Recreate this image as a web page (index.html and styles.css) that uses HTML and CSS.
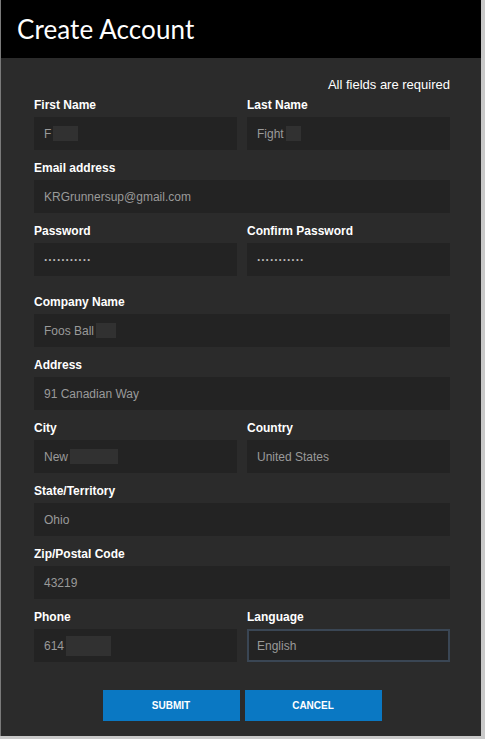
FILE: index.html
```html
<!DOCTYPE html>
<html>
<head>
<meta charset="utf-8">
<link rel="stylesheet" href="styles.css">
</head>
<body>
<div class="window">
  <header class="header"><h1 class="title">Create Account</h1></header>
  <form class="form">
    <div class="required">All fields are required</div>
    <div class="grid">
      <div class="group">
        <div class="label">First Name</div>
        <div class="field">F<span class="redact r-first"></span></div>
      </div>
      <div class="group">
        <div class="label">Last Name</div>
        <div class="field">Fight<span class="redact r-last"></span></div>
      </div>
      <div class="group wide">
        <div class="label">Email address</div>
        <div class="field">KRGrunnersup@gmail.com</div>
      </div>
      <div class="group">
        <div class="label">Password</div>
        <div class="field dots">···········</div>
      </div>
      <div class="group">
        <div class="label">Confirm Password</div>
        <div class="field dots">···········</div>
      </div>
      <div class="group wide section">
        <div class="label">Company Name</div>
        <div class="field">Foos Ball<span class="redact r-company"></span></div>
      </div>
      <div class="group wide">
        <div class="label">Address</div>
        <div class="field">91 Canadian Way</div>
      </div>
      <div class="group">
        <div class="label">City</div>
        <div class="field">New<span class="redact r-city"></span></div>
      </div>
      <div class="group">
        <div class="label">Country</div>
        <div class="field">United States</div>
      </div>
      <div class="group wide">
        <div class="label">State/Territory</div>
        <div class="field">Ohio</div>
      </div>
      <div class="group wide">
        <div class="label">Zip/Postal Code</div>
        <div class="field">43219</div>
      </div>
      <div class="group">
        <div class="label">Phone</div>
        <div class="field">614<span class="redact r-phone"></span></div>
      </div>
      <div class="group">
        <div class="label">Language</div>
        <div class="field focused">English</div>
      </div>
    </div>
    <div class="actions">
      <button type="button" class="btn">SUBMIT</button>
      <button type="button" class="btn">CANCEL</button>
    </div>
  </form>
</div>
</body>
</html>
```
FILE: styles.css
```css
html, body {
  margin: 0;
  padding: 0;
}
body {
  background: #c9c9c9;
  font-family: "Liberation Sans", Arial, sans-serif;
  width: 485px;
  height: 739px;
  overflow: hidden;
}
.window {
  width: 481px;
  height: 736px;
  border-left: 1px solid #7a7a7a;
  background: #2b2b2b;
  box-sizing: border-box;
}
.header {
  height: 58px;
  background: #000;
  display: flex;
  align-items: center;
  padding-left: 16px;
}
.title {
  margin: 0;
  font-family: "Lato", "Open Sans", sans-serif;
  font-weight: 400;
  font-size: 26px;
  color: #fff;
  letter-spacing: 0.1px;
}
.form {
  padding: 19px 31px 0 33px;
}
.required {
  text-align: right;
  color: #fff;
  font-size: 13px;
  line-height: 16px;
  margin-bottom: 4px;
}
.grid {
  display: grid;
  grid-template-columns: 1fr 1fr;
  column-gap: 10px;
  row-gap: 10px;
}
.group {
  display: flex;
  flex-direction: column;
  gap: 4px;
}
.wide {
  grid-column: 1 / -1;
}
.section {
  margin-top: 8px;
}
.label {
  color: #fff;
  font-size: 12px;
  font-weight: 700;
  line-height: 16px;
}
.field {
  height: 33px;
  box-sizing: border-box;
  background: #232323;
  color: #9a9a9a;
  font-size: 12px;
  padding-left: 10px;
  display: flex;
  align-items: center;
}
.dots {
  color: #b8b8b8;
  font-weight: 700;
  letter-spacing: 0.3px;
}
.focused {
  border: 2px solid #3a4654;
  padding-left: 8px;
}
.redact {
  display: inline-block;
  height: 15px;
  background: #313131;
  margin-left: 2px;
}
.r-first { width: 25px; }
.r-last { width: 15px; }
.r-company { width: 20px; }
.r-city { width: 48px; }
.r-phone { width: 45px; height: 20px; }
.actions {
  display: flex;
  justify-content: center;
  gap: 5px;
  margin-top: 28px;
}
.btn {
  width: 137px;
  height: 31px;
  border: none;
  background: #0a78c3;
  color: #fff;
  font-family: "Liberation Sans", Arial, sans-serif;
  font-weight: 700;
  font-size: 10px;
  padding: 0;
}
```
